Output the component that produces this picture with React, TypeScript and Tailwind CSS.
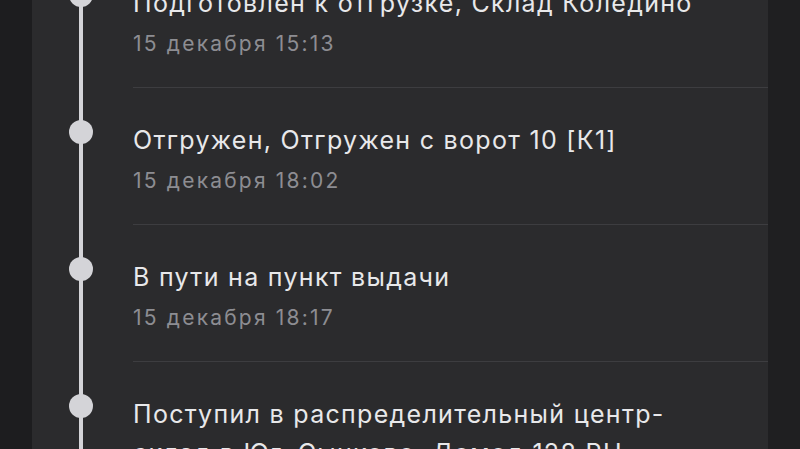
import React from "react";

type Item = { title: string[]; date?: string };

const items: Item[] = [
  { title: ["Подготовлен к отгрузке, Склад Коледино"], date: "15 декабря 15:13" },
  { title: ["Отгружен, Отгружен с ворот 10 [К1]"], date: "15 декабря 18:02" },
  { title: ["В пути на пункт выдачи"], date: "15 декабря 18:17" },
  {
    title: [
      "Поступил в распределительный центр-",
      "склад в Юг, Сынково, Домод 128 RU",
    ],
    date: "15 декабря 21:40",
  },
];

export default function App() {
  return (
    <div
      className="w-[800px] h-[449px] overflow-hidden flex bg-[#1c1c1e]"
      style={{ fontFamily: "Inter, 'Noto Sans', sans-serif" }}
    >
      <div className="w-[32px] shrink-0 bg-[#1d1d1f]" />
      <div className="w-[736px] shrink-0 bg-[#2b2b2d] relative overflow-hidden">
        <div className="absolute left-[47px] top-0 bottom-0 w-[4px] bg-[#d4d4d8]" />
        <div className="-mt-[49px] flex flex-col">
          {items.map((it, i) => (
            <div key={i} className="flex">
              <div className="w-[101px] shrink-0 relative">
                <div className="absolute left-[37px] top-[32px] w-[24px] h-[24px] rounded-full bg-[#d4d4d8]" />
              </div>
              <div className="flex-1 border-b border-[#3d3d40] pt-[33px] pb-[30px]">
                {it.title.map((t, j) => (
                  <div
                    key={j}
                    className="text-[25px] leading-[39px] text-[#e8e8ea] tracking-[1.3px] whitespace-nowrap"
                  >
                    {t}
                  </div>
                ))}
                <div className="mt-[8px] text-[21px] leading-[26px] text-[#8d8d92] tracking-[2.2px] whitespace-nowrap">
                  {it.date}
                </div>
              </div>
            </div>
          ))}
        </div>
      </div>
      <div className="w-[32px] shrink-0 bg-[#1f1f21]" />
    </div>
  );
}
